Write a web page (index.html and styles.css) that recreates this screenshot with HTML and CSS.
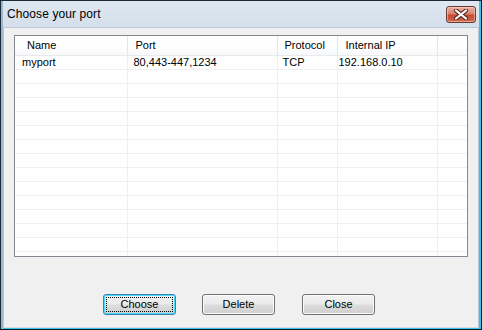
FILE: index.html
```html
<!DOCTYPE html>
<html lang="en">
<head>
    <meta charset="UTF-8">
    <title>Choose your port</title>
    <link rel="stylesheet" href="styles.css">
</head>
<body>
    <div class="window">
        <div class="titlebar">
            <span class="title">Choose your port</span>
            <button class="close-x" type="button">
                <svg width="16" height="11" viewBox="0 0 16 11">
                    <path d="M3 1.5 L13 9.5 M13 1.5 L3 9.5" stroke="#5a2a22" stroke-width="4.2" stroke-linecap="round"/>
                    <path d="M3 1.5 L13 9.5 M13 1.5 L3 9.5" stroke="#ffffff" stroke-width="2.2" stroke-linecap="round"/>
                </svg>
            </button>
        </div>
        <div class="client">
            <div class="list">
                <table class="ports">
                    <colgroup>
                        <col class="c-name">
                        <col class="c-port">
                        <col class="c-proto">
                        <col class="c-ip">
                        <col>
                    </colgroup>
                    <thead>
                        <tr>
                            <th class="h-name">Name</th>
                            <th class="h-port">Port</th>
                            <th class="h-proto">Protocol</th>
                            <th class="h-ip">Internal IP</th>
                            <th></th>
                        </tr>
                    </thead>
                    <tbody>
                        <tr>
                            <td class="d-name">myport</td>
                            <td class="d-port">80,443-447,1234</td>
                            <td class="d-proto">TCP</td>
                            <td class="d-ip">192.168.0.10</td>
                            <td></td>
                        </tr>
                        <tr><td></td><td></td><td></td><td></td><td></td></tr>
                        <tr><td></td><td></td><td></td><td></td><td></td></tr>
                        <tr><td></td><td></td><td></td><td></td><td></td></tr>
                        <tr><td></td><td></td><td></td><td></td><td></td></tr>
                        <tr><td></td><td></td><td></td><td></td><td></td></tr>
                        <tr><td></td><td></td><td></td><td></td><td></td></tr>
                        <tr><td></td><td></td><td></td><td></td><td></td></tr>
                        <tr><td></td><td></td><td></td><td></td><td></td></tr>
                        <tr><td></td><td></td><td></td><td></td><td></td></tr>
                        <tr><td></td><td></td><td></td><td></td><td></td></tr>
                        <tr><td></td><td></td><td></td><td></td><td></td></tr>
                        <tr><td></td><td></td><td></td><td></td><td></td></tr>
                        <tr><td></td><td></td><td></td><td></td><td></td></tr>
                        <tr><td></td><td></td><td></td><td></td><td></td></tr>
                    </tbody>
                </table>
            </div>
            <div class="buttons">
                <button class="btn default" type="button"><span>Choose</span></button>
                <button class="btn" type="button">Delete</button>
                <button class="btn" type="button">Close</button>
            </div>
        </div>
    </div>
</body>
</html>
```

FILE: styles.css
```css
/* reset */
*, *:before, *:after {
    margin: 0;
    padding: 0;
    box-sizing: border-box;
}
html, body {
    width: 482px;
    height: 330px;
    overflow: hidden;
}
body {
    font: normal 11px/13px 'Liberation Sans', Arial, sans-serif;
    color: #000;
    background: #1a2530;
}

/* window frame */
.window {
    width: 482px;
    height: 330px;
    display: flex;
    flex-direction: column;
    border: 1px solid #1c2b38;
    border-right-color: #0e1820;
    border-bottom-color: #0e1820;
    padding: 0 2px 1px 2px;
    background: linear-gradient(#dfe8f1, #d2deea 30px, #c9d7e5);
    box-shadow: inset 2px 0 #9cb6cd, inset -2px -2px #37c3ea;
}
.titlebar {
    height: 26px;
    display: flex;
    align-items: center;
    padding: 0 3px 0 4px;
}
.title {
    font-size: 12px;
    color: #000;
    letter-spacing: 0.1px;
}
.close-x {
    margin-left: auto;
    margin-top: 1px;
    width: 30px;
    height: 17px;
    border: 1px solid #6b3a33;
    border-radius: 3px;
    background: linear-gradient(#eab2a4, #d8826d 45%, #c54a30 55%, #cf6a4e);
    box-shadow: inset 0 0 0 1px rgba(255, 220, 210, 0.5);
    display: flex;
    align-items: center;
    justify-content: center;
}
.close-x svg {
    display: block;
}

/* client area */
.client {
    flex: 1;
    background: #f0f0f0;
    border: 1px solid #b9c8d6;
    border-bottom-color: #d6dde4;
    padding: 7px 0 0 10px;
    display: flex;
    flex-direction: column;
}
.list {
    width: 454px;
    height: 222px;
    border: 1px solid #828790;
    background: #fff;
    overflow: hidden;
}
.ports {
    width: 452px;
    table-layout: fixed;
    border-collapse: collapse;
}
.c-name { width: 112px; }
.c-port { width: 150px; }
.c-proto { width: 60px; }
.c-ip { width: 100px; }

.ports th {
    height: 19px;
    font-weight: normal;
    text-align: left;
    white-space: nowrap;
    background: linear-gradient(#ffffff, #ffffff 50%, #f7f8fa);
    border-right: 1px solid #e3e5e8;
    border-bottom: 1px solid #e8eaec;
    padding: 0;
    vertical-align: middle;
}
.ports td {
    height: 14px;
    padding: 0;
    white-space: nowrap;
    border-right: 1px solid #efefef;
    border-bottom: 1px solid #efefef;
    vertical-align: middle;
}
.ports th:last-child, .ports td:last-child {
    border-right: 0;
}
.h-name { padding-left: 12px !important; }
.h-port { padding-left: 8px !important; }
.h-proto { padding-left: 7px !important; }
.h-ip { padding-left: 8px !important; }
.d-name { padding-left: 7px !important; }
.d-port { padding-left: 6px !important; }
.d-proto { padding-left: 5px !important; }
.d-ip { padding-left: 1px !important; }

/* buttons */
.buttons {
    display: flex;
    gap: 26px;
    margin-top: 37px;
    padding-left: 89px;
}
.btn {
    width: 73px;
    height: 21px;
    font: normal 11px/13px 'Liberation Sans', Arial, sans-serif;
    color: #000;
    border: 1px solid #707070;
    border-radius: 3px;
    background: linear-gradient(#f2f2f2, #ebebeb 48%, #dddddd 52%, #cfcfcf);
    box-shadow: inset 0 0 0 1px #fbfbfb;
}
.btn.default {
    border-color: #3c7fb1;
    box-shadow: inset 0 0 0 1px #48d8fb;
    padding: 2px;
}
.btn.default span {
    display: block;
    height: 15px;
    line-height: 13px;
    border: 1px dotted #000;
}
.btn:last-child {
    margin-left: 1px;
}
```
